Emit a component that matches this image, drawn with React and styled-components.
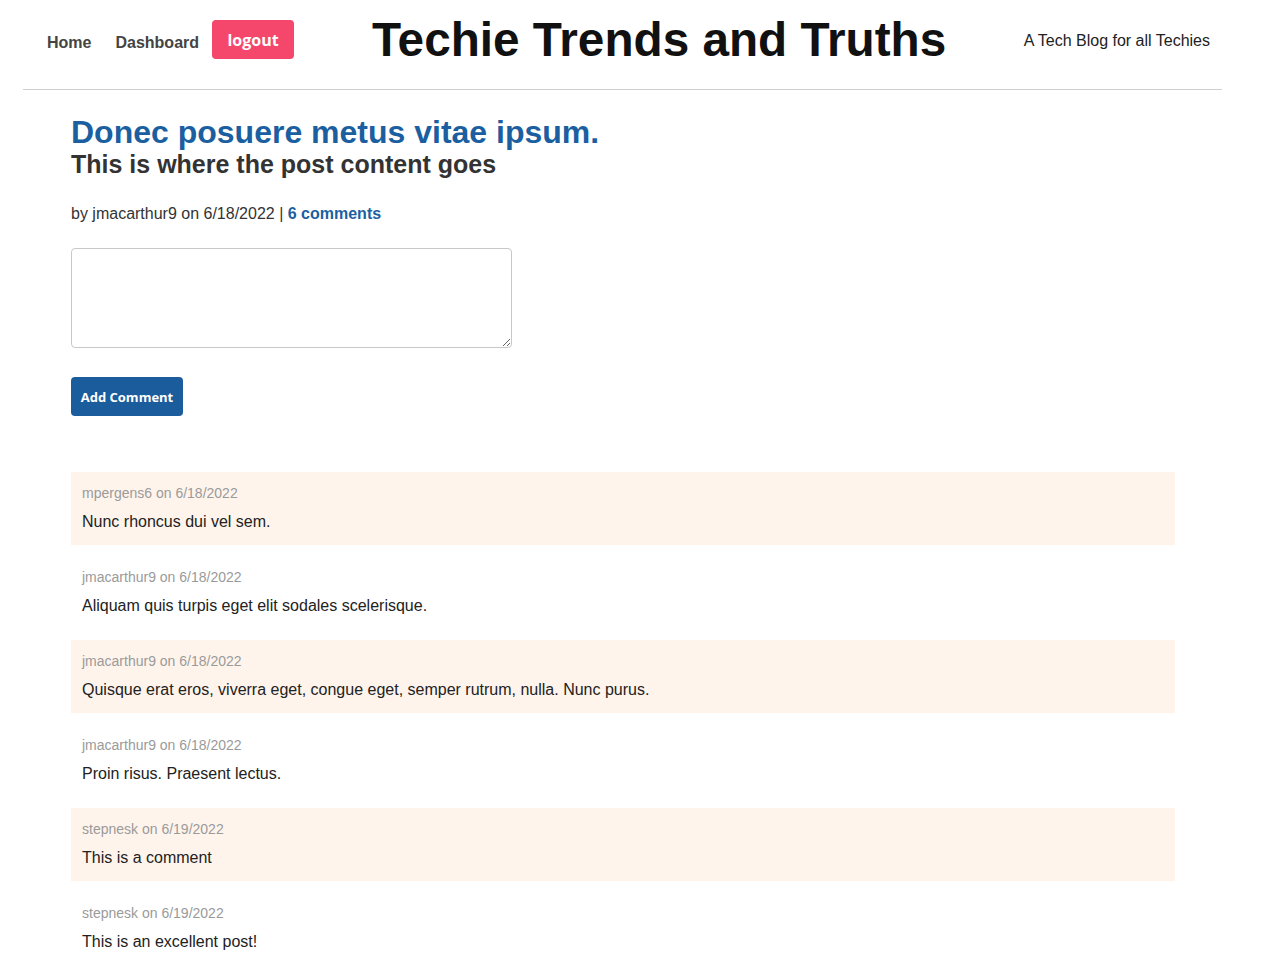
import React from "react";
import styled, { createGlobalStyle } from "styled-components";

const GlobalStyle = createGlobalStyle`
  body {
    margin: 0;
    background: #fff;
    font-family: "Liberation Sans", Arial, sans-serif;
    color: #222;
  }
`;

const Header = styled.header`
  display: flex;
  align-items: center;
  height: 79px;
  padding: 0 12px 10px 24px;
  margin: 0 52px 0 23px;
  border-bottom: 1px solid #cfcfcf;
`;

const Nav = styled.nav`
  display: flex;
  align-items: center;
`;

const NavLink = styled.a`
  font-size: 16px;
  font-weight: bold;
  color: #444;
  text-decoration: none;
  margin-top: 6px;
  margin-right: ${(p) => p.$gap}px;
`;

const LogoutButton = styled.button`
  height: 39px;
  width: 82px;
  padding: 0;
  border: none;
  border-radius: 4px;
  background: #f4476b;
  color: #fff;
  font-family: "Open Sans", sans-serif;
  font-size: 16px;
  font-weight: bold;
`;

const SiteTitle = styled.h1`
  margin: 0 0 0 78px;
  font-size: 47.7px;
  font-weight: bold;
  color: #111;
  line-height: 1;
`;

const Tagline = styled.p`
  margin: 3px 0 0 auto;
  font-size: 16px;
  color: #222;
`;

const Main = styled.main`
  padding: 24px 99px 0 71px;
`;

const PostTitle = styled.h2`
  margin: 0;
  font-size: 32px;
  line-height: 36px;
  color: #1b5fa1;
`;

const PostContent = styled.h3`
  margin: 0;
  font-size: 25px;
  line-height: 28px;
  color: #333;
`;

const Meta = styled.p`
  margin: 26px 0 0;
  font-size: 16px;
  line-height: 20px;
  color: #333;
`;

const CommentsLink = styled.a`
  color: #1b5fa1;
  font-weight: bold;
  text-decoration: none;
`;

const CommentForm = styled.form`
  display: flex;
  flex-direction: column;
  align-items: flex-start;
  margin-top: 24px;
`;

const TextArea = styled.textarea`
  box-sizing: border-box;
  width: 441px;
  height: 100px;
  border: 1px solid #c8c8c8;
  border-radius: 4px;
  font-family: inherit;
`;

const SubmitButton = styled.button`
  margin-top: 29px;
  height: 39px;
  width: 112px;
  border: none;
  border-radius: 4px;
  background: #1b5c9d;
  color: #fff;
  font-family: "Open Sans", sans-serif;
  font-size: 13px;
  font-weight: bold;
`;

const CommentList = styled.div`
  display: flex;
  flex-direction: column;
  gap: 11px;
  margin-top: 56px;
`;

const CommentItem = styled.div`
  padding: 12px 11px 13px;
  background: ${(p) => (p.$shaded ? "#fff4ec" : "transparent")};
`;

const CommentMeta = styled.div`
  font-size: 14px;
  line-height: 18px;
  color: #9a9a9a;
  margin-bottom: 10px;
`;

const CommentText = styled.div`
  font-size: 16px;
  line-height: 20px;
  color: #222;
`;

const comments = [
  { user: "mpergens6", date: "6/18/2022", text: "Nunc rhoncus dui vel sem." },
  { user: "jmacarthur9", date: "6/18/2022", text: "Aliquam quis turpis eget elit sodales scelerisque." },
  { user: "jmacarthur9", date: "6/18/2022", text: "Quisque erat eros, viverra eget, congue eget, semper rutrum, nulla. Nunc purus." },
  { user: "jmacarthur9", date: "6/18/2022", text: "Proin risus. Praesent lectus." },
  { user: "stepnesk", date: "6/19/2022", text: "This is a comment" },
  { user: "stepnesk", date: "6/19/2022", text: "This is an excellent post!" },
];

const App = () => {
  return (
    <>
      <GlobalStyle />
      <Header>
        <Nav>
          <NavLink href="#" $gap={24}>Home</NavLink>
          <NavLink href="#" $gap={13}>Dashboard</NavLink>
          <LogoutButton>logout</LogoutButton>
        </Nav>
        <SiteTitle>Techie Trends and Truths</SiteTitle>
        <Tagline>A Tech Blog for all Techies</Tagline>
      </Header>

      <Main>
        <PostTitle>Donec posuere metus vitae ipsum.</PostTitle>
        <PostContent>This is where the post content goes</PostContent>
        <Meta>
          by jmacarthur9 on 6/18/2022 | <CommentsLink href="#">6 comments</CommentsLink>
        </Meta>

        <CommentForm onSubmit={(e) => e.preventDefault()}>
          <TextArea name="comment" />
          <SubmitButton type="submit">Add Comment</SubmitButton>
        </CommentForm>

        <CommentList>
          {comments.map((c, i) => (
            <CommentItem key={i} $shaded={i % 2 === 0}>
              <CommentMeta>
                {c.user} on {c.date}
              </CommentMeta>
              <CommentText>{c.text}</CommentText>
            </CommentItem>
          ))}
        </CommentList>
      </Main>
    </>
  );
};

export default App;
